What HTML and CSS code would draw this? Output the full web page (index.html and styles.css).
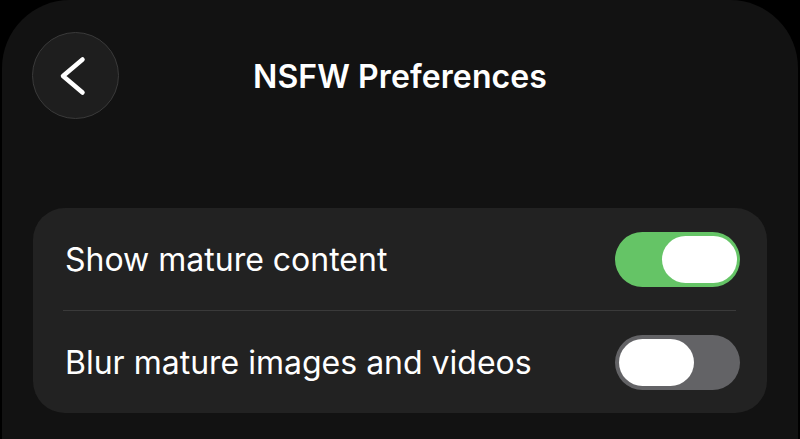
FILE: index.html
```html
<!DOCTYPE html>
<html lang="en">
<head>
    <meta charset="UTF-8">
    <meta name="viewport" content="width=device-width, initial-scale=1.0">
    <title>NSFW Preferences</title>
    <link rel="stylesheet" href="styles.css">
</head>
<body>
    <div class="sheet">
        <header class="nav">
            <button class="back-button" aria-label="Back">
                <svg width="40" height="40" viewBox="0 0 40 40">
                    <path d="M26.5 3.5 L7 20 L26.5 36.5" fill="none" stroke="#fff" stroke-width="4.5" stroke-linecap="round" stroke-linejoin="round"/>
                </svg>
            </button>
            <h1>NSFW Preferences</h1>
            <div class="spacer"></div>
        </header>

        <!-- Settings group -->
        <div class="group">
            <div class="row">
                <span class="label">Show mature content</span>
                <span class="switch on"><span class="knob"></span></span>
            </div>
            <div class="divider"></div>
            <div class="row">
                <span class="label">Blur mature images and videos</span>
                <span class="switch"><span class="knob"></span></span>
            </div>
        </div>
    </div>
</body>
</html>
```

FILE: styles.css
```css
body {
    margin: 0;
    padding: 0;
    background-color: #000;
    font-family: Inter, "Noto Sans", sans-serif;
    color: #fff;
    height: 100vh;
    overflow: hidden;
}

.sheet {
    background-color: #121212;
    margin: 0 2px;
    min-height: 100vh;
    border-radius: 68px 68px 0 0;
    padding: 32px 31px 0;
    box-sizing: border-box;
}

.nav {
    display: grid;
    grid-template-columns: 1fr auto 1fr;
    align-items: center;
}

.back-button {
    width: 87px;
    height: 87px;
    border-radius: 50%;
    background-color: #1e1e1e;
    border: 1px solid #3a3a3a;
    display: flex;
    align-items: center;
    justify-content: center;
    padding: 0;
    cursor: pointer;
    box-sizing: border-box;
    margin-left: -1px;
}

h1 {
    margin: 0;
    font-size: 32px;
    font-weight: 600;
    letter-spacing: 0.1px;
    margin-top: 1px;
}

.group {
    margin-top: 89px;
    background-color: #222222;
    border-radius: 32px;
}

.row {
    display: flex;
    align-items: center;
    justify-content: space-between;
    height: 102px;
    padding: 0 27px 0 32px;
}

.label {
    font-size: 32px;
    font-weight: 400;
}

.divider {
    height: 1px;
    background-color: #3a3a3a;
    margin: 0 31px 0 30px;
}

.switch {
    width: 125px;
    height: 55px;
    border-radius: 28px;
    background-color: #636366;
    display: flex;
    align-items: center;
    padding: 0 4px;
    box-sizing: border-box;
}

.switch.on {
    background-color: #65c466;
    justify-content: flex-end;
    padding: 0 3px;
}

.knob {
    width: 75px;
    height: 47px;
    border-radius: 24px;
    background-color: #fff;
}
```
